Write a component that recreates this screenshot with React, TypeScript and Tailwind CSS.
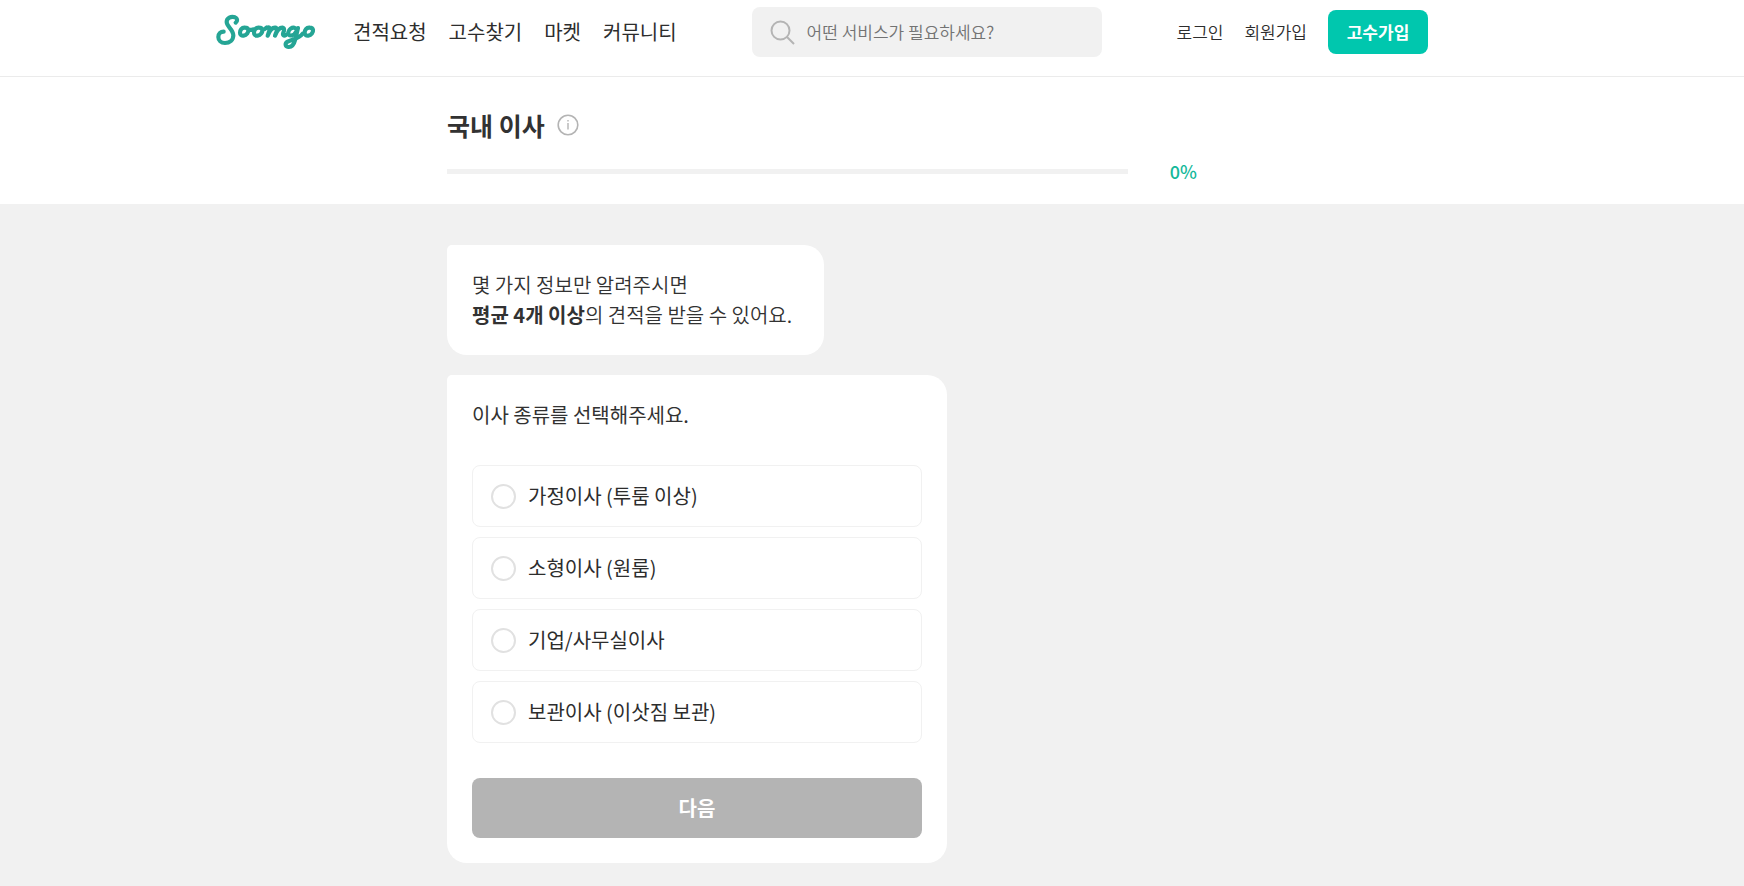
import { useState } from 'react';

const NAV = ['견적요청', '고수찾기', '마켓', '커뮤니티'];
const OPTIONS = ['가정이사 (투룸 이상)', '소형이사 (원룸)', '기업/사무실이사', '보관이사 (이삿짐 보관)'];

function Logo() {
  return (
    <svg width="101" height="36" viewBox="47 42 303 108" fill="none" stroke="#25a595" strokeWidth="12.5" strokeLinecap="round" strokeLinejoin="round" aria-hidden="true">
      <path d="M106 68C112 64 112 55 104 52C92 48 79 54 79 66C79 80 99 88 99 106C99 120 88 129 74 129C62 129 54 121 54 111C54 101 61 95 70 95" />
      <path d="M134 83C124 82 119 90 119 98C119 105 124 108 130 107C139 106 145 97 144 90C143 85 139 83 134 83M144 88C149 91 154 90 158 88" />
      <path d="M176 83C166 82 161 90 161 98C161 105 166 108 172 107C181 106 187 97 186 90C185 85 181 83 176 83M186 88C190 90 194 87 198 83" />
      <path d="M200 83C206 80 210 83 208 89L202 107C207 94 216 83 224 83C231 84 230 90 228 96L224 107C229 94 238 83 246 83C253 84 252 91 249 98C246 105 250 109 257 105" />
      <path d="M293 84L285 118C281 134 274 142 264 141C254 140 253 130 262 125C274 118 296 117 307 101M290 91C287 82 278 81 271 86C263 92 261 103 268 106C276 108 284 102 288 94" />
      <path d="M328 83C318 82 313 90 313 98C313 105 318 108 324 107C333 106 339 97 338 90C337 85 333 83 328 83" />
    </svg>
  );
}

export default function App() {
  const [selected, setSelected] = useState<string | null>(null);

  return (
    <div className="flex min-h-screen flex-col bg-[#f1f1f1] font-['Noto_Sans_CJK_KR',sans-serif] text-[#323232]">
      <header className="border-b border-[#ebebeb] bg-white pr-[100px]">
        <div className="mx-auto flex h-[76px] max-w-[1212px] items-start justify-between pt-[7px]">
          <div className="flex h-[50px] items-center gap-9">
            <a href="#" aria-label="Soomgo" className="block">
              <Logo />
            </a>
            <nav className="flex gap-[22px] text-[20px] leading-[30px] text-[#2d2d2d]">
              {NAV.map((item) => (
                <a key={item} href="#">{item}</a>
              ))}
            </nav>
          </div>

          <label className="flex h-[50px] w-[350px] items-center gap-3 rounded-lg bg-[#f1f1f1] px-[18px]">
            <svg width="25" height="25" viewBox="0 0 25 25" fill="none" stroke="#b4b4b4" strokeWidth="2" aria-hidden="true">
              <circle cx="10.5" cy="10.5" r="9" />
              <path d="M17 17l7 7" />
            </svg>
            <input
              type="search"
              aria-label="서비스 검색"
              placeholder="어떤 서비스가 필요하세요?"
              className="min-w-0 flex-1 bg-transparent text-[17px] font-[350] leading-[26px] outline-none placeholder:text-[#737373]"
            />
          </label>

          <div className="flex h-[50px] items-center gap-[21px] text-[17px] leading-[26px] text-[#2d2d2d]">
            <a href="#" className="font-[350]">로그인</a>
            <a href="#" className="font-[350]">회원가입</a>
            <button type="button" className="h-11 w-[100px] rounded-lg bg-[#00c7ae] font-bold text-white">고수가입</button>
          </div>
        </div>
      </header>

      <section className="bg-white pr-[100px]">
        <div className="mx-auto max-w-[750px] pt-[30px] pb-5">
          <div className="flex items-center gap-3">
            <h1 className="text-[25px] font-bold leading-[36px]">국내 이사</h1>
            <button type="button" aria-label="서비스 정보">
              <svg width="22" height="22" viewBox="0 0 22 22" fill="none" stroke="#b4b4b4" aria-hidden="true">
                <circle cx="11" cy="11" r="9.8" strokeWidth="1.6" />
                <path d="M11 9v6.5M11 6v1.6" strokeWidth="1.4" />
              </svg>
            </button>
          </div>
          <div className="mt-[15px] flex items-center justify-between">
            <div role="progressbar" aria-label="진행률" aria-valuenow={0} className="h-[5px] w-[681px] bg-[#f1f1f1]" />
            <span className="text-[18px] font-medium leading-[26px] text-[#15b89a]">0%</span>
          </div>
        </div>
      </section>

      <main className="pr-[100px]">
        <div className="mx-auto flex max-w-[750px] flex-col items-start gap-5 py-[41px] text-[20px] leading-[30px]">
          <p className="rounded-[20px] rounded-tl-[5px] bg-white py-[25px] pr-8 pl-[25px] font-[350]">
            몇 가지 정보만 알려주시면
            <br />
            <strong className="font-bold">평균 4개 이상</strong>의 견적을 받을 수 있어요.
          </p>

          <form className="w-full max-w-[500px] rounded-[20px] rounded-tl-[5px] bg-white p-[25px]" onSubmit={(e) => e.preventDefault()}>
            <fieldset>
              <legend>이사 종류를 선택해주세요.</legend>
              <div className="mt-[35px] flex flex-col gap-2.5">
                {OPTIONS.map((option) => (
                  <label key={option} className="flex h-[62px] cursor-pointer items-center gap-3 rounded-lg border border-[#f1f1f1] px-[18px] text-[#2d2d2d]">
                    <input
                      type="radio"
                      name="moving-type"
                      checked={selected === option}
                      onChange={() => setSelected(option)}
                      className="size-[25px] appearance-none rounded-full border-2 border-[#e1e1e1] checked:border-[7px] checked:border-[#00c7ae]"
                    />
                    {option}
                  </label>
                ))}
              </div>
            </fieldset>
            <button
              type="submit"
              disabled={selected === null}
              className="mt-[35px] h-[60px] w-full rounded-lg bg-[#00c7ae] font-bold text-white disabled:bg-[#b4b4b4]"
            >
              다음
            </button>
          </form>
        </div>
      </main>
    </div>
  );
}
